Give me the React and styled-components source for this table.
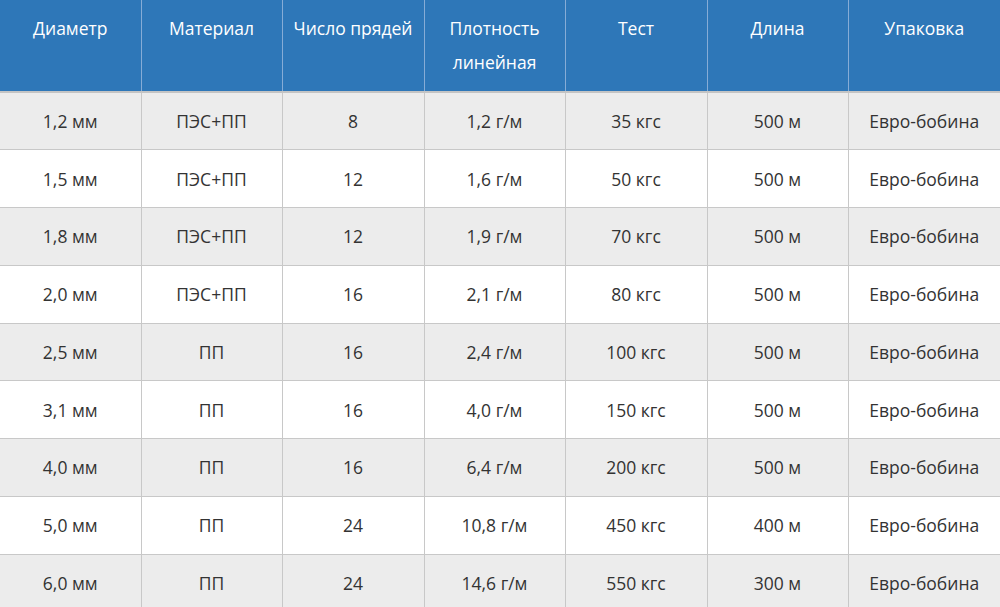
import React from "react";
import styled, { createGlobalStyle } from "styled-components";

const Global = createGlobalStyle`
  html, body { margin: 0; padding: 0; background: #fff; }
  body { font-family: "Open Sans", "Noto Sans", sans-serif; }
`;

const Table = styled.table`
  width: 1000px;
  border-collapse: collapse;
  table-layout: fixed;
  font-family: "Open Sans", "Noto Sans", sans-serif;
  font-size: 17.5px;
`;

const HeadCell = styled.th`
  width: ${(p) => p.$w}px;
  height: 92px;
  box-sizing: border-box;
  background: #2e77b8;
  color: #fff;
  font-weight: 500;
  vertical-align: top;
  text-align: center;
  padding: 11px 2px 0;
  line-height: 34px;
  border-left: 1px solid #86acd6;
  border-bottom: 2px solid #c4c4c4;
  &:first-child { border-left: none; }
`;

const Row = styled.tr`
  background: ${(p) => (p.$alt ? "#ececec" : "#ffffff")};
`;

const Cell = styled.td`
  height: 57.75px;
  box-sizing: border-box;
  padding: 0 2px;
  text-align: center;
  vertical-align: middle;
  color: #333;
  border-left: 1px solid #c8c8c8;
  border-bottom: 1px solid #c8c8c8;
  &:first-child { border-left: none; }
`;

const headers = [
  ["Диаметр", 141],
  ["Материал", 141],
  ["Число прядей", 142],
  ["Плотность линейная", 141],
  ["Тест", 142],
  ["Длина", 141],
  ["Упаковка", 152],
];

const rows = [
  ["1,2 мм", "ПЭС+ПП", "8", "1,2 г/м", "35 кгс", "500 м", "Евро-бобина"],
  ["1,5 мм", "ПЭС+ПП", "12", "1,6 г/м", "50 кгс", "500 м", "Евро-бобина"],
  ["1,8 мм", "ПЭС+ПП", "12", "1,9 г/м", "70 кгс", "500 м", "Евро-бобина"],
  ["2,0 мм", "ПЭС+ПП", "16", "2,1 г/м", "80 кгс", "500 м", "Евро-бобина"],
  ["2,5 мм", "ПП", "16", "2,4 г/м", "100 кгс", "500 м", "Евро-бобина"],
  ["3,1 мм", "ПП", "16", "4,0 г/м", "150 кгс", "500 м", "Евро-бобина"],
  ["4,0 мм", "ПП", "16", "6,4 г/м", "200 кгс", "500 м", "Евро-бобина"],
  ["5,0 мм", "ПП", "24", "10,8 г/м", "450 кгс", "400 м", "Евро-бобина"],
  ["6,0 мм", "ПП", "24", "14,6 г/м", "550 кгс", "300 м", "Евро-бобина"],
];

export default function App() {
  return (
    <>
      <Global />
      <Table>
        <thead>
          <tr>
            {headers.map(([h, w]) => (
              <HeadCell key={h} $w={w}>{h}</HeadCell>
            ))}
          </tr>
        </thead>
        <tbody>
          {rows.map((r, i) => (
            <Row key={i} $alt={i % 2 === 0}>
              {r.map((c, j) => (
                <Cell key={j}>{c}</Cell>
              ))}
            </Row>
          ))}
        </tbody>
      </Table>
    </>
  );
}
